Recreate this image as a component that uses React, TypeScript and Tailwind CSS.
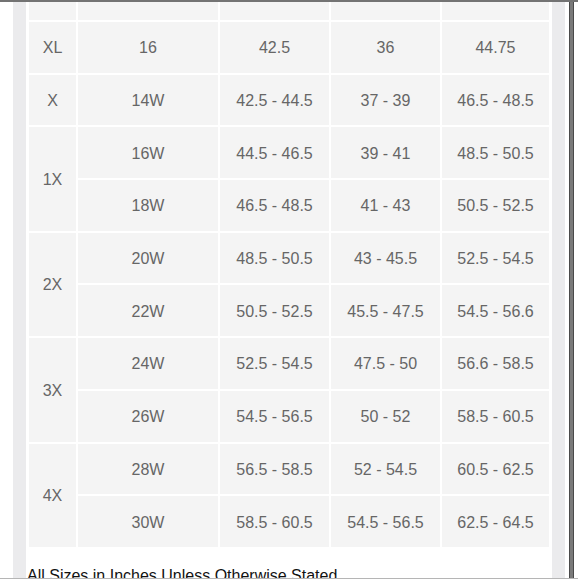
type Row = { group?: string; span?: number; size: string; bust: string; waist: string; hips: string };

const ROWS: Row[] = [
  { group: "XL", span: 1, size: "16", bust: "42.5", waist: "36", hips: "44.75" },
  { group: "X", span: 1, size: "14W", bust: "42.5 - 44.5", waist: "37 - 39", hips: "46.5 - 48.5" },
  { group: "1X", span: 2, size: "16W", bust: "44.5 - 46.5", waist: "39 - 41", hips: "48.5 - 50.5" },
  { size: "18W", bust: "46.5 - 48.5", waist: "41 - 43", hips: "50.5 - 52.5" },
  { group: "2X", span: 2, size: "20W", bust: "48.5 - 50.5", waist: "43 - 45.5", hips: "52.5 - 54.5" },
  { size: "22W", bust: "50.5 - 52.5", waist: "45.5 - 47.5", hips: "54.5 - 56.6" },
  { group: "3X", span: 2, size: "24W", bust: "52.5 - 54.5", waist: "47.5 - 50", hips: "56.6 - 58.5" },
  { size: "26W", bust: "54.5 - 56.5", waist: "50 - 52", hips: "58.5 - 60.5" },
  { group: "4X", span: 2, size: "28W", bust: "56.5 - 58.5", waist: "52 - 54.5", hips: "60.5 - 62.5" },
  { size: "30W", bust: "58.5 - 60.5", waist: "54.5 - 56.5", hips: "62.5 - 64.5" },
];

const cell = "flex items-center justify-center bg-[#f4f4f4] pt-[2px]";

function SizeTable() {
  return (
    <div className="grid grid-cols-[47px_140px_109px_109px_107px] auto-rows-[50.7px] gap-[2px]">
      {ROWS.map((r, i) => (
        <div key={i} className="contents">
          {r.group && (
            <div className={cell} style={{ gridRow: `span ${r.span}` }}>
              {r.group}
            </div>
          )}
          <div className={`${cell} ${r.group ? "" : "col-start-2"}`}>{r.size}</div>
          <div className={cell}>{r.bust}</div>
          <div className={cell}>{r.waist}</div>
          <div className={cell}>{r.hips}</div>
        </div>
      ))}
    </div>
  );
}

export default function App() {
  return (
    <div className="flex h-[580px] w-[578px] flex-col overflow-hidden bg-white font-['Liberation_Sans',Arial,sans-serif] text-[16px] text-[#666]">
      <div className="h-[2px] shrink-0 bg-[#737373]" />
      <div className="flex h-[576px] shrink-0 overflow-hidden">
        <div className="w-[13px] shrink-0" />
        <div className="w-[13px] shrink-0 bg-[#ebebed]" />
        <div className="w-[3px] shrink-0" />
        <div className="w-[520px] shrink-0">
          {/* header row, mostly scrolled off the top */}
          <div className="mt-[-32.7px] mb-[2px] grid h-[50.7px] grid-cols-[47px_140px_109px_109px_107px] gap-[2px]">
            <div className="bg-[#f4f4f4]" />
            <div className="bg-[#f4f4f4]" />
            <div className="bg-[#f4f4f4]" />
            <div className="bg-[#f4f4f4]" />
            <div className="bg-[#f4f4f4]" />
          </div>
          <SizeTable />
          <p className="-ml-[2px] mt-[19px] leading-[20px] whitespace-nowrap text-[#111]">
            All Sizes in Inches Unless Otherwise Stated
          </p>
        </div>
        <div className="w-[3px] shrink-0" />
        <div className="w-[13px] shrink-0 bg-[#ebebed]" />
        <div className="w-[4px] shrink-0" />
        <div className="w-[5px] shrink-0 border-x border-[#4a4a4a] bg-[#7a7a7a]" />
        <div className="w-[4px] shrink-0" />
      </div>
      <div className="h-[1px] shrink-0 bg-[#b5b5b5]" />
    </div>
  );
}
